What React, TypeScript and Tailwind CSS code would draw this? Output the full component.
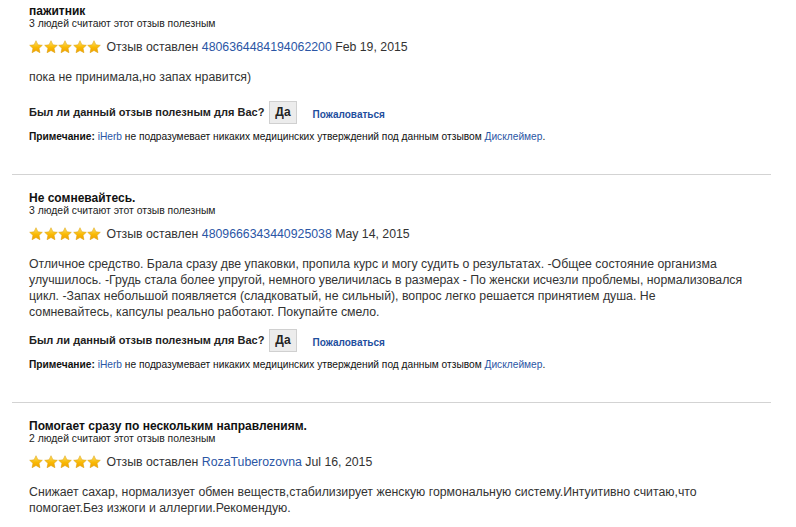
import React from "react";

const Star = () => (
  <svg width="14" height="14" viewBox="0 0 24 24" className="block">
    <defs>
      <linearGradient id="sg" x1="0" y1="0" x2="0" y2="1">
        <stop offset="0%" stopColor="#ffe36a" />
        <stop offset="55%" stopColor="#f9b904" />
        <stop offset="100%" stopColor="#f0a000" />
      </linearGradient>
    </defs>
    <path
      d="M12 1.2l3.3 7 7.6.9-5.6 5.2 1.5 7.6L12 18.1l-6.8 3.8 1.5-7.6L1.1 9.1l7.6-.9z"
      fill="url(#sg)"
      stroke="#d99a00"
      strokeWidth="0.8"
      strokeLinejoin="round"
    />
  </svg>
);

type Review = {
  title: string;
  count: string;
  author: string;
  date: string;
  body: React.ReactNode;
  bodyGap?: string;
};

const reviews: Review[] = [
  {
    title: "пажитник",
    count: "3 людей считают этот отзыв полезным",
    author: "4806364484194062200",
    date: "Feb 19, 2015",
    body: "пока не принимала,но запах нравится)",
    bodyGap: "mb-[15px]",
  },
  {
    title: "Не сомневайтесь.",
    count: "3 людей считают этот отзыв полезным",
    author: "4809666343440925038",
    date: "May 14, 2015",
    body: (
      <>
        Отличное средство. Брала сразу две упаковки, пропила курс и могу судить о результатах. -Общее состояние организма
        улучшилось. -Грудь стала более упругой, немного увеличилась в размерах - По женски исчезли проблемы, нормализовался
        цикл. -Запах небольшой появляется (сладковатый, не сильный), вопрос легко решается принятием душа. Не
        <br />
        сомневайтесь, капсулы реально работают. Покупайте смело.
      </>
    ),
    bodyGap: "mb-[8px]",
  },
  {
    title: "Помогает сразу по нескольким направлениям.",
    count: "2 людей считают этот отзыв полезным",
    author: "RozaTuberozovna",
    date: "Jul 16, 2015",
    body: "Снижает сахар, нормализует обмен веществ,стабилизирует женскую гормональную систему.Интуитивно считаю,что помогает.Без изжоги и аллергии.Рекомендую.",
  },
];

function ReviewBlock({ r, last }: { r: Review; last: boolean }) {
  return (
    <div className={"pt-[16px] " + (last ? "" : "pb-[31px] border-b border-[#d3d3d3]")}>
      <div className="pl-[17px] pr-[2px]">
        <div className="text-[12px] leading-[14px] font-bold text-[#111]">{r.title}</div>
        <div className="text-[10.4px] leading-[12px] text-[#222]">{r.count}</div>
        <div className="mt-[9px] flex items-center h-[16px]">
          <div className="flex gap-[0.6px]">
            <Star />
            <Star />
            <Star />
            <Star />
            <Star />
          </div>
          <div className="ml-[5px] text-[12.3px] leading-[16px] text-[#333]">
            Отзыв оставлен <span className="text-[#2b56a5]">{r.author}</span> {r.date}
          </div>
        </div>
        <div className={"mt-[14px] text-[12.3px] leading-[16px] text-[#333] " + (r.bodyGap ?? "")}>{r.body}</div>
        {!last && (
          <>
            <div className="flex items-center h-[24px]">
              <span className="text-[11px] font-bold text-[#222]">Был ли данный отзыв полезным для Вас?</span>
              <span className="ml-[5px] h-[23px] px-[5px] flex items-center bg-[#ececec] border border-[#d0d0d0] text-[12px] font-bold text-[#222]">
                Да
              </span>
              <span className="ml-[16px] mt-[4px] text-[10px] font-bold text-[#1f4f9e]">Пожаловаться</span>
            </div>
            <div className="mt-[7px] text-[10.2px] leading-[12px] text-[#111]">
              <span className="font-bold">Примечание: </span>
              <span className="text-[#2b56a5]">iHerb</span> не подразумевает никаких медицинских утверждений под данным отзывом{" "}
              <span className="text-[#2b56a5]">Дисклеймер</span>.
            </div>
          </>
        )}
      </div>
    </div>
  );
}

export default function App() {
  return (
    <div
      className="w-[796px] h-[527px] overflow-hidden bg-white pl-[12px] pr-[25px] -mt-[12px]"
      style={{ fontFamily: '"Liberation Sans", Arial, sans-serif' }}
    >
      {reviews.map((r, i) => (
        <ReviewBlock key={i} r={r} last={i === reviews.length - 1} />
      ))}
    </div>
  );
}
